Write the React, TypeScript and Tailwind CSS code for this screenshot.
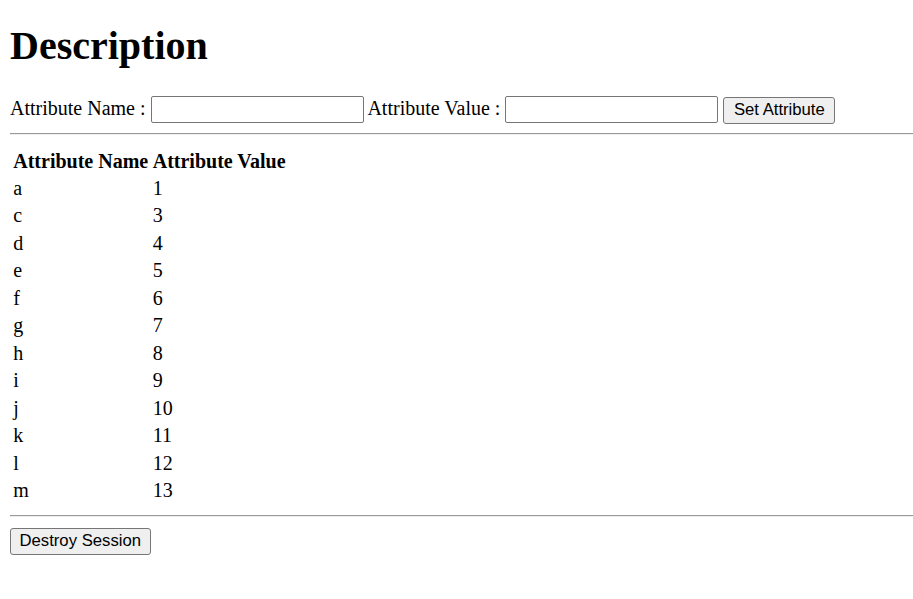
const rows: [string, number][] = [
  ["a", 1],
  ["c", 3],
  ["d", 4],
  ["e", 5],
  ["f", 6],
  ["g", 7],
  ["h", 8],
  ["i", 9],
  ["j", 10],
  ["k", 11],
  ["l", 12],
  ["m", 13],
];

function TextBox() {
  return (
    <input
      type="text"
      className="inline-block h-[27px] w-[213px] rounded-[2px] border border-[#767676] bg-white px-[2px] align-baseline font-['Liberation_Sans',sans-serif] text-[16.7px] outline-none"
    />
  );
}

function Btn({ children, wide }: { children: string; wide?: boolean }) {
  return (
    <button
      className={
        "inline-block h-[27px] rounded-[3px] border border-[#767676] bg-[#efefef] align-baseline font-['Liberation_Sans',sans-serif] text-[16.7px] leading-none text-black " +
        (wide ? "px-[9.5px]" : "px-[8.5px]")
      }
    >
      {children}
    </button>
  );
}

function Rule() {
  return <hr className="my-[10px] mr-[-10px] h-0 border-t border-b border-t-[#9a9a9a] border-b-[#eeeeee]" />;
}

export default function App() {
  return (
    <div className="bg-white px-[10px] pb-[10px] pt-[23px] font-['Liberation_Serif',serif] text-[20px] leading-[23px] text-black">
      <h1 className="mb-[26px] text-[40px] font-bold leading-[46px]">Description</h1>

      <div className="h-[28px] pb-[1px] leading-[27px]">
        Attribute Name : <TextBox /> Attribute Value : <TextBox /> <Btn wide>Set Attribute</Btn>
      </div>

      <Rule />

      <div className="pt-[1px]">
        <table className="mb-[-1px] [border-collapse:separate] [border-spacing:2.5px]">
          <thead>
            <tr>
              <th className="pb-[0.25px] pl-[1.25px] pr-[1.25px] pt-[2.25px] text-left font-bold">Attribute Name</th>
              <th className="pb-[0.25px] pl-[1.25px] pr-[1.25px] pt-[2.25px] text-left font-bold">Attribute Value</th>
            </tr>
          </thead>
          <tbody>
            {rows.map(([name, value]) => (
              <tr key={name}>
                <td className="p-[1.25px]">{name}</td>
                <td className="p-[1.25px]">{value}</td>
              </tr>
            ))}
          </tbody>
        </table>
      </div>

      <Rule />

      <div className="pt-[1px]">
        <Btn>Destroy Session</Btn>
      </div>
    </div>
  );
}
